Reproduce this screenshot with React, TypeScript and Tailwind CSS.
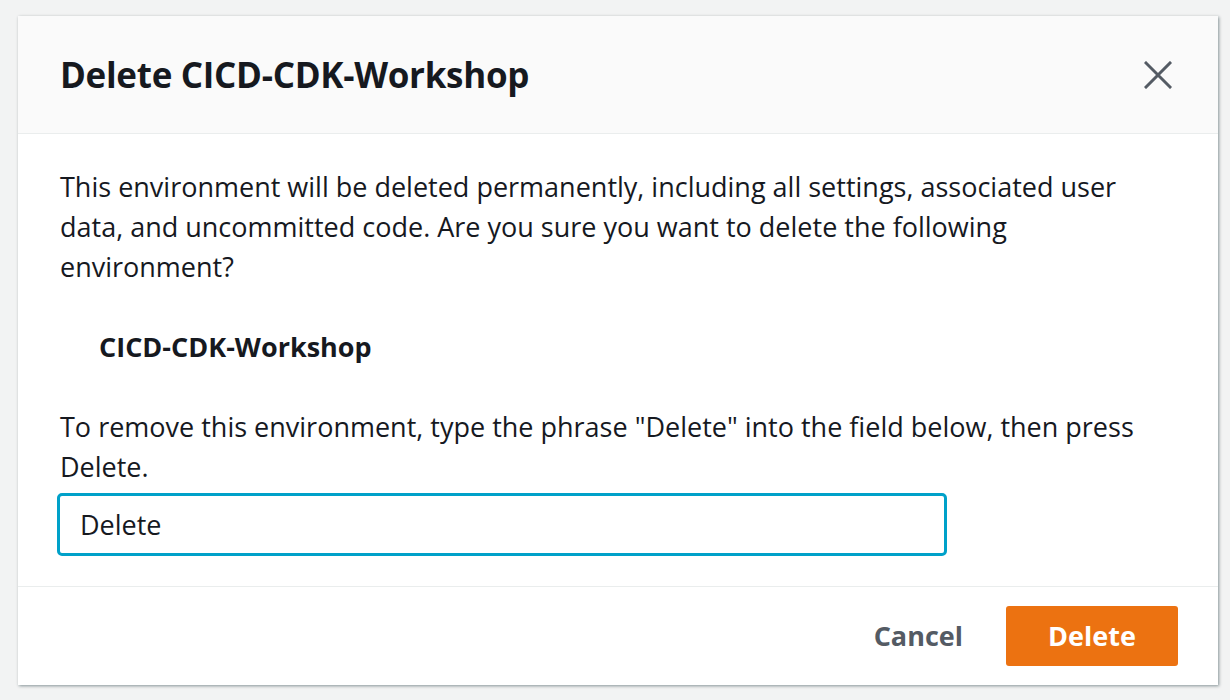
import React from "react";

export default function App() {
  return (
    <div
      className="w-[1230px] h-[700px] overflow-hidden bg-[#f2f3f3] text-[#16191f] pt-[16px] pl-[18px]"
      style={{ fontFamily: '"Open Sans", "Noto Sans", sans-serif' }}
    >
      <div className="w-[1200px] bg-white shadow-[1px_1px_3px_rgba(0,28,36,0.45)]">
        {/* Header */}
        <div className="flex items-center justify-between h-[118px] px-[42px] bg-[#fafafa] border-b border-[#eaeded]">
          <h2 className="text-[35px] font-bold tracking-[-0.3px] leading-none">
            Delete CICD-CDK-Workshop
          </h2>
          <button className="mr-[4px] text-[#545b64]">
            <svg width="28" height="28" viewBox="0 0 28 28" fill="none">
              <path
                d="M2 2 L26 26 M26 2 L2 26"
                stroke="currentColor"
                strokeWidth="3"
                strokeLinecap="square"
              />
            </svg>
          </button>
        </div>

        {/* Body */}
        <div className="px-[42px] pt-[33px] pb-[30px] text-[27px] leading-[40px] border-b border-[#eaeded]">
          <p>
            This environment will be deleted permanently, including all settings, associated user
            data, and uncommitted code. Are you sure you want to delete the following
            environment?
          </p>
          <p className="mt-[40px] ml-[39px] font-bold">CICD-CDK-Workshop</p>
          <p className="mt-[40px]">
            To remove this environment, type the phrase "Delete" into the field below, then press
            Delete.
          </p>
          <div className="mt-[6px] -ml-[3px] w-[890px] h-[63px] flex items-center px-[20px] border-[3px] border-[#00a1c9] rounded-[5px] bg-white">
            <span>Delete</span>
          </div>
        </div>

        {/* Footer */}
        <div className="flex items-center justify-end gap-[43px] h-[98px] pr-[40px]">
          <button className="text-[27px] font-bold text-[#545b64]">Cancel</button>
          <button className="w-[172px] h-[60px] rounded-[3px] bg-[#ec7211] text-white text-[27px] font-bold">
            Delete
          </button>
        </div>
      </div>
    </div>
  );
}
